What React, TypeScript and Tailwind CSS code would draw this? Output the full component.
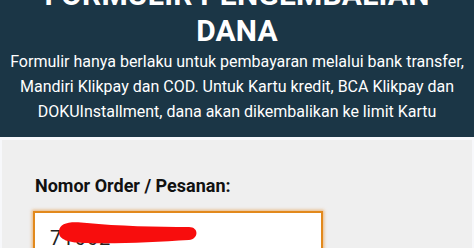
const App = () => {
  return (
    <div className="w-[474px] h-[248px] overflow-hidden bg-white font-['Roboto',sans-serif]">
      <div className="bg-[#1b3646] text-white text-center pb-[13px]">
        <h1 className="-mt-[23px] text-[30px] leading-[36px] font-bold tracking-[0.2px]">
          FORMULIR PENGEMBALIAN
          <br />
          DANA
        </h1>
        <p className="text-[16px] leading-[25px] px-2">
          Formulir hanya berlaku untuk pembayaran melalui bank transfer,
          <br />
          Mandiri Klikpay dan COD. Untuk Kartu kredit, BCA Klikpay dan
          <br />
          DOKUInstallment, dana akan dikembalikan ke limit Kartu
        </p>
      </div>
      <div className="border-t-[3px] border-x-2 border-[#f7f8fb] bg-[#efefef] h-[200px] pt-[32px] pl-[31px]">
        <label className="block pl-[2px] text-[18px] leading-[28px] font-bold text-[#111] mb-[11px]">
          Nomor Order / Pesanan:
        </label>
        <div className="relative w-[290px] h-[60px] bg-white border-2 border-[#e2891c] shadow-[0_0_3px_1px_rgba(230,140,40,0.6)] pl-[15px] pt-[11px]">
          <span className="text-[20px] leading-[28px] text-[#222] tracking-[1px]">71662</span>
          <svg className="absolute left-[22px] top-[8px]" width="142" height="24" viewBox="0 0 142 24">
            <path
              d="M2 10 C3 2 12 0 30 2 C60 5 100 6 132 6 C142 6 142 18 132 19 C100 21 60 23 30 22 C12 22 1 19 2 10 Z"
              fill="#f80d0d"
            />
          </svg>
        </div>
      </div>
    </div>
  );
};

export default App;
